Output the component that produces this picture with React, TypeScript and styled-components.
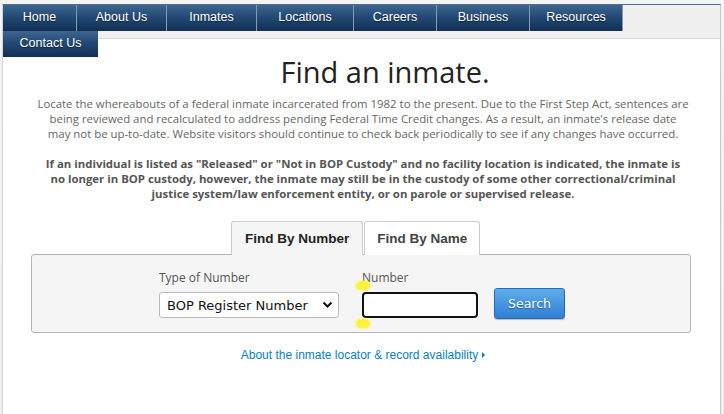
import React from "react";
import styled, { createGlobalStyle } from "styled-components";

const Global = createGlobalStyle`
  html, body { margin: 0; padding: 0; background: #ffffff; }
  body { font-family: "Open Sans", Arial, sans-serif; }
`;

const Page = styled.div`
  background: linear-gradient(#f4f4f4, #efefef);
  padding-top: 4px;
  height: 414px;
  box-sizing: border-box;
  overflow: hidden;
`;

const Frame = styled.div`
  margin: 0 3px 0 2px;
  border-top: 1px solid #4d6d93;
  border-left: 1px solid #d4d4d4;
  border-right: 1px solid #c8c8c8;
  background: #ffffff;
  height: 100%;
`;

const Header = styled.header`
  height: 33px;
  background: #f0f0f0;
  border-bottom: 1px solid #d9d9d9;
  position: relative;
  z-index: 2;
`;

const Nav = styled.ul`
  list-style: none;
  margin: 0;
  padding: 0;
  display: flex;
  flex-wrap: wrap;
  width: 700px;
`;

const NavItem = styled.li<{ $w: number }>`
  width: ${(p) => p.$w}px;
  height: 26px;
  box-sizing: border-box;
  border-right: 1px solid #8799ad;
  background: linear-gradient(#3f6690 0%, #234a74 45%, #112f54 100%);
  color: #ffffff;
  font-family: "Liberation Sans", Arial, sans-serif;
  font-size: 12.5px;
  line-height: 24px;
  text-align: center;
  text-shadow: 0 1px 1px rgba(0, 0, 0, 0.5);
  &:last-child { border-right: none; }
`;

const Content = styled.main`
  padding: 16px 30px 0 33px;
  text-align: center;
`;

const Title = styled.h1`
  margin: 0 0 0 44px;
  font-family: "Open Sans", sans-serif;
  font-weight: 400;
  font-size: 29px;
  line-height: 34px;
  color: #222222;
`;

const Intro = styled.p`
  margin: 7px -2px 0;
  font-size: 11.4px;
  line-height: 15px;
  color: #666666;
`;

const Notice = styled.p`
  margin: 15px 8px 0;
  font-size: 11.4px;
  line-height: 15px;
  font-weight: 700;
  color: #555555;
`;

const Tabs = styled.div`
  display: flex;
  gap: 1px;
  margin: 20px 0 0 195px;
`;

const Tab = styled.div<{ $active?: boolean }>`
  height: 34px;
  box-sizing: border-box;
  padding: 0 ${(p) => (p.$active ? 13 : 12)}px;
  border: 1px solid #cccccc;
  border-bottom: none;
  border-radius: 3px 3px 0 0;
  background: ${(p) => (p.$active ? "#f5f5f5" : "#ffffff")};
  color: ${(p) => (p.$active ? "#222222" : "#444444")};
  font-family: "Liberation Sans", Arial, sans-serif;
  font-weight: 700;
  font-size: 13.5px;
  line-height: 33px;
  margin-bottom: -1px;
  position: relative;
`;

const Panel = styled.div`
  margin-left: -5px;
  margin-right: -1px;
  height: 79px;
  box-sizing: border-box;
  border: 1px solid #b5b5b5;
  border-radius: 3px;
  background: #f5f5f5;
  display: flex;
  align-items: flex-end;
  padding: 0 0 14px 127px;
  gap: 23px;
  text-align: left;
`;

const Field = styled.div`
  display: flex;
  flex-direction: column;
  gap: 7px;
  position: relative;
`;

const Label = styled.label`
  font-size: 12px;
  line-height: 14px;
  color: #555555;
`;

const Select = styled.div`
  width: 180px;
  height: 26px;
  box-sizing: border-box;
  border: 1px solid #b9b9b9;
  border-radius: 3px;
  background: #ffffff;
  display: flex;
  align-items: center;
  justify-content: space-between;
  padding: 0 5px 0 7px;
  font-family: "DejaVu Sans", Verdana, sans-serif;
  font-size: 13px;
  color: #111111;
`;

const Input = styled.div`
  width: 116px;
  height: 26px;
  box-sizing: border-box;
  border: 2px solid #111111;
  border-radius: 4px;
  background: #ffffff;
`;

const Marker = styled.span<{ $top: boolean }>`
  position: absolute;
  left: -6px;
  ${(p) => (p.$top ? "top: 10px;" : "bottom: -10px;")}
  width: 14px;
  height: 9px;
  border-radius: 50%;
  background: #fff23a;
  box-shadow: 0 0 2px 1px rgba(255, 240, 60, 0.6);
`;

const Button = styled.button`
  width: 71px;
  height: 31px;
  margin-left: -7px;
  margin-bottom: -1px;
  border: 1px solid #2a69b5;
  border-radius: 3px;
  background: linear-gradient(#5eaeea, #2f7fd3);
  color: #ffffff;
  font-family: "DejaVu Sans", Verdana, sans-serif;
  font-size: 12.5px;
  text-shadow: 0 1px 1px rgba(0, 0, 0, 0.35);
  box-shadow: 0 1px 1px rgba(0, 0, 0, 0.25);
  cursor: pointer;
`;

const MoreLink = styled.a`
  display: inline-block;
  margin: 15px 0 0 0;
  color: #0b7fc6;
  font-family: "Liberation Sans", Arial, sans-serif;
  font-size: 12px;
  text-decoration: none;
`;

const Arrow = styled.span`
  display: inline-block;
  margin-left: 4px;
  width: 0;
  height: 0;
  border-top: 3px solid transparent;
  border-bottom: 3px solid transparent;
  border-left: 3px solid #0b7fc6;
  vertical-align: 1px;
`;

const navItems: [string, number][] = [
  ["Home", 74],
  ["About Us", 90],
  ["Inmates", 90],
  ["Locations", 97],
  ["Careers", 83],
  ["Business", 93],
  ["Resources", 93],
  ["Contact Us", 95],
];

export default function App() {
  return (
    <>
      <Global />
      <Page>
        <Frame>
          <Header>
            <Nav>
              {navItems.map(([label, w]) => (
                <NavItem key={label} $w={w}>
                  {label}
                </NavItem>
              ))}
            </Nav>
          </Header>
          <Content>
            <Title>Find an inmate.</Title>
            <Intro>
              Locate the whereabouts of a federal inmate incarcerated from 1982 to the present. Due to
              the First Step Act, sentences are being reviewed and recalculated to address pending
              Federal Time Credit changes. As a result, an inmate's release date
              <br />
              may not be up-to-date. Website visitors should continue to check back periodically to see
              if any changes have occurred.
            </Intro>
            <Notice>
              If an individual is listed as "Released" or "Not in BOP Custody" and no facility location
              is indicated, the inmate is no longer in BOP custody, however, the inmate may still be in
              the custody of some other correctional/criminal justice system/law enforcement entity, or
              on parole or supervised release.
            </Notice>
            <Tabs>
              <Tab $active>Find By Number</Tab>
              <Tab>Find By Name</Tab>
            </Tabs>
            <Panel>
              <Field>
                <Label>Type of Number</Label>
                <Select>
                  <span>BOP Register Number</span>
                  <svg width="11" height="8" viewBox="0 0 11 8">
                    <path d="M1.5 1.5 L5.5 5.5 L9.5 1.5" fill="none" stroke="#111" strokeWidth="2" />
                  </svg>
                </Select>
              </Field>
              <Field>
                <Label>Number</Label>
                <Input />
                <Marker $top />
                <Marker $top={false} />
              </Field>
              <Button>Search</Button>
            </Panel>
            <MoreLink href="#">
              About the inmate locator &amp; record availability
              <Arrow />
            </MoreLink>
          </Content>
        </Frame>
      </Page>
    </>
  );
}
